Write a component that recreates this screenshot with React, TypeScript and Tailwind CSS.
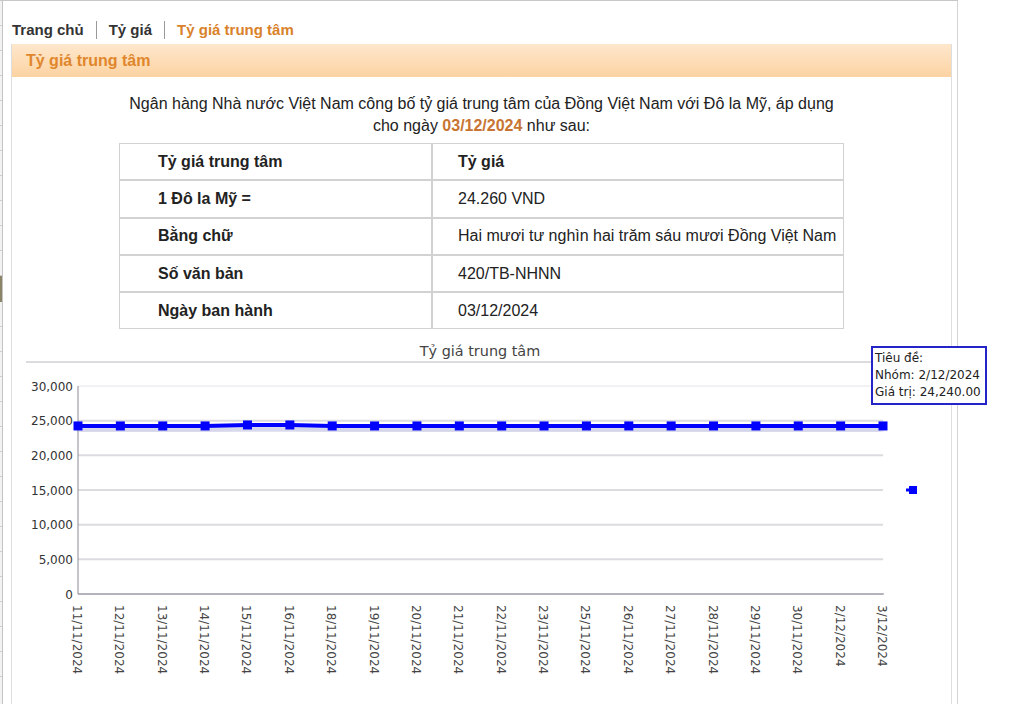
import React from 'react';

const dates = [
  '11/11/2024', '12/11/2024', '13/11/2024', '14/11/2024', '15/11/2024', '16/11/2024', '18/11/2024',
  '19/11/2024', '20/11/2024', '21/11/2024', '22/11/2024', '23/11/2024', '25/11/2024', '26/11/2024',
  '27/11/2024', '28/11/2024', '29/11/2024', '30/11/2024', '2/12/2024', '3/12/2024',
];
const values = [
  24240, 24240, 24240, 24240, 24380, 24380, 24240, 24240, 24240, 24240,
  24240, 24240, 24240, 24240, 24240, 24240, 24240, 24240, 24240, 24240,
];

// plot box in page coordinates
const X0 = 78;
const X1 = 883;
const Y0 = 386;
const Y1 = 594;
const px = (i: number) => X0 + (i * (X1 - X0)) / (dates.length - 1);
const py = (v: number) => Y1 - (v / 30000) * (Y1 - Y0);

const rows = [
  { label: 'Tỷ giá trung tâm', value: 'Tỷ giá', head: true },
  { label: '1 Đô la Mỹ =', value: '24.260 VND' },
  { label: 'Bằng chữ', value: 'Hai mươi tư nghìn hai trăm sáu mươi Đồng Việt Nam' },
  { label: 'Số văn bản', value: '420/TB-NHNN' },
  { label: 'Ngày ban hành', value: '03/12/2024' },
];

const RateChart = () => {
  const pts = values.map((v, i) => `${px(i)},${py(v)}`).join(' ');
  const shadow = values.map((v, i) => `${px(i)},${py(v) + 4}`).join(' ');
  const ticks = [0, 5000, 10000, 15000, 20000, 25000, 30000];

  return (
    <div className="relative ml-[14px] w-[920px] font-['DejaVu_Sans',Verdana,sans-serif]">
      <div className="h-[23px] border-b-2 border-[#dcdce0] pt-[1px] pr-[12px] text-center text-[14.4px] leading-[20px] text-[#444]">
        Tỷ giá trung tâm
      </div>
      <svg width={920} height={341} viewBox="26 363 920 341" className="block">
        <defs>
          <filter id="glow" x="-5%" y="-200%" width="110%" height="500%">
            <feGaussianBlur stdDeviation="2" />
          </filter>
        </defs>
        {ticks.map(t => (
          <line
            key={t}
            x1={X0}
            x2={X1}
            y1={py(t)}
            y2={py(t)}
            stroke={t === 30000 ? '#e4e4e8' : '#dcdce0'}
            strokeWidth={t === 30000 ? 1 : 2}
          />
        ))}
        <line x1={X0} x2={X0} y1={Y0} y2={Y1} stroke="#8a8a96" strokeWidth={1} />
        <line x1={X0} x2={X1 + 1} y1={Y1} y2={Y1} stroke="#8a8a96" strokeWidth={1} />
        {ticks.map(t => (
          <text key={t} x={73} y={py(t) + 4.5} textAnchor="end" fontSize={12} fill="#333">
            {t.toLocaleString('en-US')}
          </text>
        ))}
        {dates.map((d, i) => (
          <text
            key={d}
            x={px(i) - 5}
            y={605}
            fontSize={12}
            fill="#444"
            transform={`rotate(90 ${px(i) - 5} 605)`}
          >
            {d}
          </text>
        ))}
        <polyline points={shadow} fill="none" stroke="#9090c8" strokeOpacity={0.5} strokeWidth={5} filter="url(#glow)" />
        <polyline points={pts} fill="none" stroke="#0000ff" strokeWidth={4} />
        {values.map((v, i) => (
          <rect key={i} x={px(i) - 4.5} y={py(v) - 4.5} width={9} height={9} fill="#0000ff" />
        ))}
        {/* legend */}
        <line x1={906} x2={917} y1={490} y2={490} stroke="#0000ff" strokeWidth={3} />
        <rect x={909} y={486} width={8} height={8} fill="#0000ff" />
      </svg>
      <div className="absolute left-[845px] top-[6px] w-[116px] border-2 border-[#2424c8] bg-white px-[2px] py-[2px] text-[12px] leading-[17px] text-[#222]">
        <div>Tiêu đề:</div>
        <div>Nhóm: 2/12/2024</div>
        <div>Giá trị: 24,240.00</div>
      </div>
    </div>
  );
};

export default function App() {
  return (
    <div className="flex h-[704px] w-[1015px] overflow-hidden bg-white font-['Liberation_Sans',Arial,sans-serif] text-[#222]">
      <div className="flex w-[958px] border-t border-[#c8c8c8]">
        {/* cut-off side column */}
        <div className="flex w-[3px] flex-col border-r border-[#c4c4c4] bg-[#f2f2f2]">
          {Array.from({ length: 11 }).map((_, i) => (
            <div key={i} className="h-[25px] border-b border-[#d0d0d0]" />
          ))}
          <div className="h-[26px] bg-[#8c8468]" />
          {Array.from({ length: 15 }).map((_, i) => (
            <div key={i} className="h-[25px] border-b border-[#d0d0d0]" />
          ))}
        </div>

        <div className="flex flex-1 flex-col border-r border-[#d4d4d4] pl-[8px] pr-[5px]">
          <div className="mt-[19px] mb-[4px] flex h-[20px] items-center pl-[1px] text-[15px] font-bold leading-[20px]">
            <span className="text-[#333]">Trang chủ</span>
            <span className="mx-[12px] h-[18px] w-px bg-[#9a9a9a]" />
            <span className="text-[#333]">Tỷ giá</span>
            <span className="mx-[12px] h-[18px] w-px bg-[#9a9a9a]" />
            <span className="text-[#d9822b]">Tỷ giá trung tâm</span>
          </div>

          <div className="flex flex-1 flex-col border-x border-[#dedede]">
            <div className="flex h-[33px] items-center bg-gradient-to-b from-[#fee7cc] to-[#fcd3a2] pl-[14px] text-[16px] font-bold text-[#e0862c]">
              Tỷ giá trung tâm
            </div>

            <p className="mx-auto mt-[16px] w-[725px] text-center text-[16px] leading-[22px] text-[#222]">
              <span className="whitespace-nowrap">
                Ngân hàng Nhà nước Việt Nam công bố tỷ giá trung tâm của Đồng Việt Nam với Đô la Mỹ, áp dụng
              </span>
              <br />
              cho ngày <b className="text-[#c87533]">03/12/2024</b> như sau:
            </p>

            <table className="mx-auto mt-[6px] w-[725px] border-separate border-spacing-0 text-[16px]">
              <tbody>
                {rows.map(r => (
                  <tr key={r.label}>
                    <td className="h-[37.3px] w-[313px] border border-[#d2d2d2] pl-[38px] font-bold text-[#222]">
                      {r.label}
                    </td>
                    <td
                      className={`h-[37.3px] border border-[#d2d2d2] pl-[25px] text-[#222] ${r.head ? 'font-bold' : ''}`}
                    >
                      {r.value}
                    </td>
                  </tr>
                ))}
              </tbody>
            </table>

            <div className="mt-[11px]">
              <RateChart />
            </div>
          </div>
        </div>
      </div>
    </div>
  );
}
